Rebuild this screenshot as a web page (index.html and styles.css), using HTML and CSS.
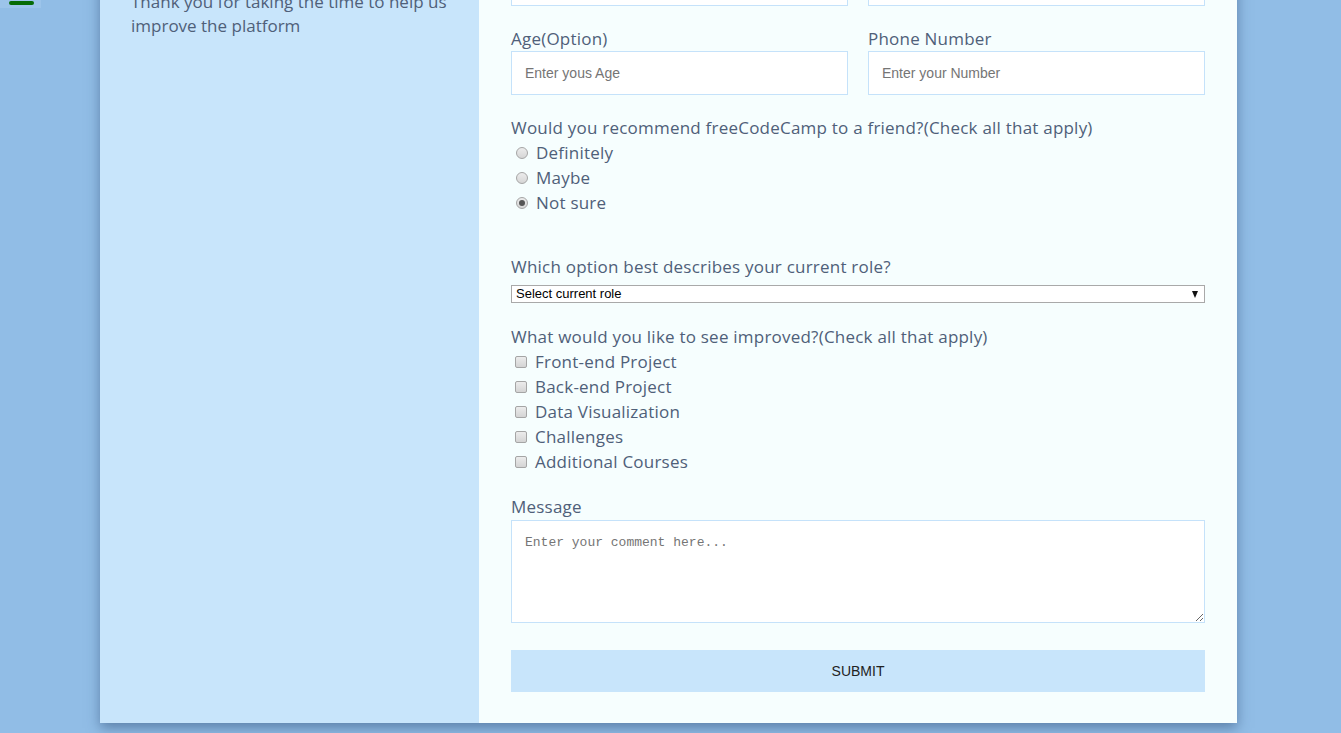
FILE: index.html
```html
<!DOCTYPE html>
<html lang="en">
<head>
<meta charset="utf-8">
<title>freeCodeCamp Survey Form</title>
<link rel="stylesheet" href="styles.css">
</head>
<body>
<div class="menu-toggle"><span class="menu-bar"></span></div>
<main class="card">
  <aside class="intro">
    <h1 class="intro-title">Survey Form</h1>
    <p class="intro-text">Thank you for taking the time to help us improve the platform</p>
  </aside>
  <form class="survey">
    <div class="row">
      <div class="field">
        <label class="label">Name</label>
        <input class="input" type="text" placeholder="Enter your Name">
      </div>
      <div class="field">
        <label class="label">Email</label>
        <input class="input" type="email" placeholder="Enter your Email">
      </div>
    </div>
    <div class="row">
      <div class="field">
        <label class="label">Age(Option)</label>
        <input class="input" type="text" placeholder="Enter yous Age">
      </div>
      <div class="field">
        <label class="label">Phone Number</label>
        <input class="input" type="text" placeholder="Enter your Number">
      </div>
    </div>
    <div class="group group-radio">
      <p class="label">Would you recommend freeCodeCamp to a friend?(Check all that apply)</p>
      <label class="choice"><input class="radio" type="radio" name="rec"><span>Definitely</span></label>
      <label class="choice"><input class="radio" type="radio" name="rec"><span>Maybe</span></label>
      <label class="choice"><input class="radio" type="radio" name="rec" checked><span>Not sure</span></label>
    </div>
    <div class="group group-select">
      <p class="label">Which option best describes your current role?</p>
      <div class="select-wrap">
        <select class="select">
          <option>Select current role</option>
          <option>Student</option>
          <option>Full Time Job</option>
          <option>Other</option>
        </select>
      </div>
    </div>
    <div class="group group-check">
      <p class="label">What would you like to see improved?(Check all that apply)</p>
      <label class="choice"><input class="check" type="checkbox"><span>Front-end Project</span></label>
      <label class="choice"><input class="check" type="checkbox"><span>Back-end Project</span></label>
      <label class="choice"><input class="check" type="checkbox"><span>Data Visualization</span></label>
      <label class="choice"><input class="check" type="checkbox"><span>Challenges</span></label>
      <label class="choice"><input class="check" type="checkbox"><span>Additional Courses</span></label>
    </div>
    <div class="group">
      <p class="label">Message</p>
      <textarea class="textarea" placeholder="Enter your comment here..."></textarea>
    </div>
    <button class="submit" type="button">SUBMIT</button>
  </form>
</main>
</body>
</html>
```
FILE: styles.css
```css
* { box-sizing: border-box; }
html, body { margin: 0; padding: 0; }
body {
  background: #91bde6;
  font-family: "Open Sans", "Noto Sans", sans-serif;
  color: #4f6079;
  overflow: hidden;
  height: 733px;
}
.menu-toggle {
  position: fixed;
  left: 0;
  top: 0;
  width: 41px;
  height: 8px;
  background: #9cc4ea;
}
.menu-bar {
  position: absolute;
  left: 9px;
  top: 1px;
  width: 25px;
  height: 4px;
  border-radius: 2px;
  background: #056b05;
}
.card {
  display: flex;
  width: 1137px;
  margin: -94px 0 0 100px;
  box-shadow: 0 5px 12px rgba(40, 70, 110, 0.5);
}
.intro {
  width: 379px;
  flex: none;
  background: #c8e5fb;
  padding: 32px 26px 32px 31px;
}
.intro-title {
  margin: 0 0 16px;
  font-size: 28px;
  line-height: 36px;
  font-weight: 600;
}
.intro-text {
  margin: 0;
  font-size: 17px;
  line-height: 24px;
}
.survey {
  flex: 1;
  background: #f6fefe;
  padding: 32px 32px 31px;
}
.row {
  display: flex;
  gap: 20px;
  margin-bottom: 21px;
}
.field { flex: 1; display: flex; flex-direction: column; }
.label {
  display: block;
  margin: 0;
  font-size: 17px;
  line-height: 24px;
  letter-spacing: 0.22px;
}
.input {
  height: 44px;
  width: 100%;
  border: 1px solid #c5e2fa;
  background: #fff;
  padding: 0 13px;
  font-family: "Liberation Sans", Arial, sans-serif;
  font-size: 14px;
  color: #333;
  outline: none;
}
.input::placeholder { color: #757575; }
.group { margin-bottom: 20px; }
.group-radio { margin-bottom: 40px; }
.group-select { margin-bottom: 22px; }
.group-check { margin-bottom: 21px; }
.choice {
  display: flex;
  align-items: center;
  height: 25px;
  font-size: 17px;
  letter-spacing: 0.22px;
}
.radio {
  appearance: none;
  -webkit-appearance: none;
  width: 12px;
  height: 12px;
  margin: 0 8px 0 5px;
  border-radius: 50%;
  border: 1px solid #a5a5a5;
  background: linear-gradient(#ececec, #d6d6d6);
  position: relative;
  flex: none;
}
.radio:checked::after {
  content: "";
  position: absolute;
  left: 2px;
  top: 2px;
  width: 6px;
  height: 6px;
  border-radius: 50%;
  background: #555;
}
.check {
  appearance: none;
  -webkit-appearance: none;
  width: 12px;
  height: 12px;
  margin: 0 8px 0 4px;
  border-radius: 2px;
  border: 1px solid #a5a5a5;
  background: linear-gradient(#ececec, #d4d4d4);
  flex: none;
}
.select-wrap {
  position: relative;
  margin-top: 6px;
}
.select-wrap::after {
  content: "";
  position: absolute;
  right: 7px;
  top: 6px;
  border-left: 3.5px solid transparent;
  border-right: 3.5px solid transparent;
  border-top: 7px solid #111;
  pointer-events: none;
}
.select {
  appearance: none;
  -webkit-appearance: none;
  display: block;
  width: 100%;
  height: 18px;
  font-family: "Liberation Sans", Arial, sans-serif;
  font-size: 13px;
  line-height: 16px;
  color: #000;
  background: #fff;
  border: 1px solid #a9a9a9;
  border-radius: 0;
  padding: 0 4px;
}
.textarea {
  display: block;
  width: 100%;
  height: 103px;
  margin-top: 1px;
  border: 1px solid #c5e2fa;
  background: #fff;
  padding: 14px 13px;
  font-family: "Liberation Mono", "DejaVu Sans Mono", monospace;
  font-size: 13px;
  color: #333;
  outline: none;
}
.textarea::placeholder { color: #757575; }
.submit {
  display: block;
  width: 100%;
  height: 42px;
  margin-top: 27px;
  border: none;
  background: #c8e5fb;
  font-family: "Liberation Sans", Arial, sans-serif;
  font-size: 14px;
  color: #222;
  cursor: pointer;
}
```
